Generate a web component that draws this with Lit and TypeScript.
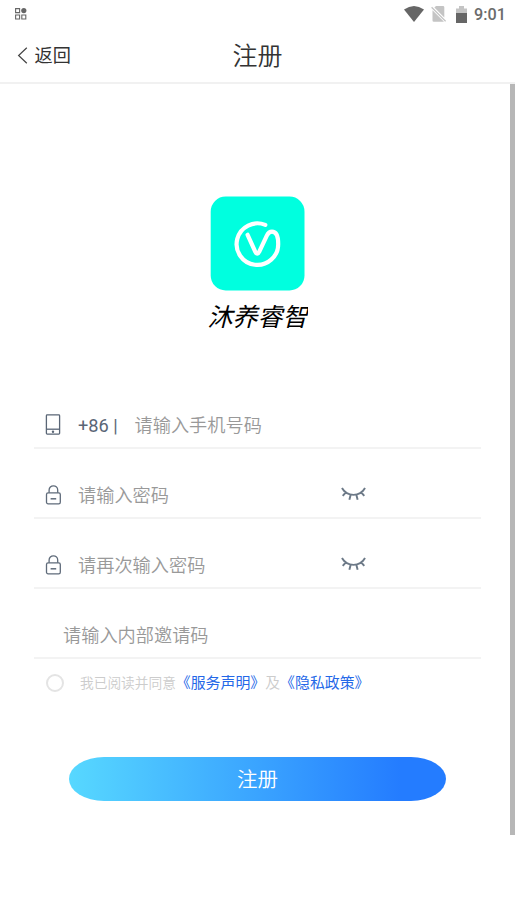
import { LitElement, html, css } from "lit";
import { customElement } from "lit/decorators.js";

const phone = html`<svg class="icon" width="16" height="22" viewBox="0 0 16 22" fill="none" stroke="#5a6676" stroke-width="1.3">
  <rect x="1.4" y=".9" width="13.2" height="19.2" rx=".8"/><path d="M1.4 15.2h13.2"/><circle cx="8" cy="17.7" r="1.2" fill="#5a6676" stroke="none"/></svg>`;
const lock = html`<svg class="icon" width="16" height="20" viewBox="0 0 16 20" fill="none" stroke="#5f6b7a" stroke-width="1.3">
  <rect x="1.5" y="7.8" width="13.8" height="11" rx="1.6"/><path d="M4.1 7.8V5a4.3 4.2 0 0 1 8.6 0v2.8"/><path d="M5.6 13.8h5.6" stroke-width="1.5"/></svg>`;
const eye = html`<svg class="eye" width="25" height="14" viewBox="0 0 26 14" fill="none" stroke="#6c7987" stroke-width="2">
  <path d="M1 .8C6.5 10.3 19.5 10.3 25 .8M5 5.2L1.8 9M21 5.2L24.2 9M10 8L8.7 13M16 8l1.3 5"/></svg>`;

@customElement("app-root")
export class AppRoot extends LitElement {
  static styles = css`
    :host {
      display: block;
      height: 917px;
      overflow: hidden;
      background: #fff;
      font-family: Roboto, "Noto Sans CJK SC", sans-serif;
    }
    svg { display: block; flex: none; }
    .status {
      height: 28px;
      display: flex;
      align-items: center;
      box-sizing: border-box;
      padding: 0 8px 0 15px;
    }
    .apps { margin-right: auto; }
    .wifi { margin-right: 7px; }
    .sim { margin-right: 10px; }
    .clock { margin-left: 7px; padding-top: 2px; font-size: 16.2px; line-height: 28px; font-weight: 500; color: #6b6b6b; width: 33px; white-space: nowrap; }
    .status svg:not(.apps) { position: relative; left: -.5px; }
    .nav {
      height: 54px;
      display: grid;
      grid-template-columns: 1fr auto 1fr;
      align-items: center;
      border-bottom: 2px solid #f1f1f1;
      color: #333;
    }
    .back { display: flex; align-items: center; padding-left: 17px; gap: 6.5px; font-size: 18.2px; line-height: 28px; }
    .back span { padding-top: 2px; }
    .title { font-size: 25px; line-height: 50px; padding-top: 4px; font-weight: 350; }
    .body { height: 751px; border-right: 5px solid #b7b7b7; box-sizing: border-box; padding: 112px 29px 0 34px; width: 515px; }
    .brand { display: flex; flex-direction: column; align-items: center; height: 217px; }
    .name { width: 100px; overflow: hidden; font-size: 25px; line-height: 36px; margin-top: 9px; font-style: italic; color: #000; white-space: nowrap; }
    .row {
      height: 68px;
      border-bottom: 2px solid #f3f3f3;
      display: flex;
      align-items: flex-end;
    }
    .row.first { height: 34px; }
    .cell { height: 46px; display: flex; align-items: center; padding-left: 11px; flex: 1; }
    .icon { margin-right: 17px; padding-top: 1px; }
    .code { width: 56.5px; padding-top: 2px; color: #5a6676; font-size: 18.2px; white-space: pre; }
    .hint { padding-top: 3px; color: #999; font-size: 18.2px; line-height: 28px; white-space: nowrap; font-weight: 350; }
    .hint.wide { width: 263px; }
    .hint.invite { margin-left: 18px; }
    .agree { display: flex; align-items: center; height: 46px; padding-left: 12px; font-size: 14.9px; color: #ccc; white-space: nowrap; font-weight: 350; }
    .agree span { margin-top: -1px; }
    .agree .radio { box-sizing: border-box; width: 18px; height: 18px; border: 2px solid #e4e4e4; border-radius: 50%; margin: 1px 16px 0 0; }
    .read { font-size: 13.7px; }
    .link { color: #2468e8; font-weight: 400; }
    .submit {
      margin: 52px 0 0 35px;
      width: 377px;
      height: 44px;
      border-radius: 35px / 22px;
      background: linear-gradient(90deg, #57d8ff, #247cff 88%);
      color: #fff;
      font-size: 20.5px;
      line-height: 46px;
      text-align: center;
      font-weight: 350;
    }
  `;

  render() {
    return html`
      <div class="status">
        <svg class="apps" width="12" height="12" viewBox="0 0 12 12" fill="none" stroke="#666" stroke-width="1.1">
          <path d="M.6.6h4v4h-4zM.6 7h4v4h-4zM6.8 7h4v4h-4z"/><circle cx="8.8" cy="2.6" r="2.6" fill="#666" stroke="none"/></svg>
        <svg class="wifi" width="20" height="16" viewBox="0 0 20 16"><path d="M0 3.5Q10-3.5 20 3.5L10 16z" fill="#666"/></svg>
        <svg class="sim" width="15" height="16" viewBox="0 0 15 16"><path d="M5 0h7q1.3 0 1.3 1.3v10.2L3.4 1.6zM1.5 4.2L13 15.7H2.8q-1.3 0-1.3-1.3z" fill="#c4c4c4"/><path d="M.6 1.3l14 14" stroke="#c4c4c4" stroke-width="1.4"/></svg>
        <svg width="11" height="17" viewBox="0 0 11 17"><path d="M0 2.5h3V0h5v2.5h3V8H0z" fill="#c4c4c4"/><path d="M0 7h11v10H0z" fill="#666"/></svg>
        <span class="clock">9:01</span>
      </div>
      <div class="nav">
        <div class="back">
          <svg width="11" height="17" viewBox="0 0 11 17" fill="none" stroke="#444" stroke-width="1.2"><path d="M9.8.7L1.6 8.5l8.2 7.8"/></svg>
          <span>返回</span>
        </div>
        <div class="title">注册</div>
        <div></div>
      </div>
      <div class="body">
        <div class="brand">
          <svg width="95" height="95" viewBox="0 0 95 95">
            <rect x=".7" y=".5" width="93.8" height="94" rx="15" fill="#00ffdf"/>
            <path d="M55.3 28.9A20.8 20.8 0 1 0 68.2 48C68.2 40.5 66.8 35.6 62 35.6C59 35.6 57.9 37.2 56.7 39.8L49.3 55.6C48 58.4 46.5 58.4 45.2 55.6L37.6 38.8" fill="none" stroke="#fff" stroke-width="4.2" stroke-linecap="round" stroke-linejoin="round"/>
          </svg>
          <div class="name">沐养睿智</div>
        </div>
        <div class="row first"><div class="cell">${phone}<span class="code">+86 |</span><span class="hint">请输入手机号码</span></div></div>
        <div class="row"><div class="cell">${lock}<span class="hint wide">请输入密码</span>${eye}</div></div>
        <div class="row"><div class="cell">${lock}<span class="hint wide">请再次输入密码</span>${eye}</div></div>
        <div class="row"><div class="cell"><span class="hint invite">请输入内部邀请码</span></div></div>
        <div class="agree">
          <span class="radio"></span><span class="read">我已阅读并同意</span><span class="link">《服务声明》</span><span>及</span><span class="link">《隐私政策》</span>
        </div>
        <div class="submit">注册</div>
      </div>
    `;
  }
}
